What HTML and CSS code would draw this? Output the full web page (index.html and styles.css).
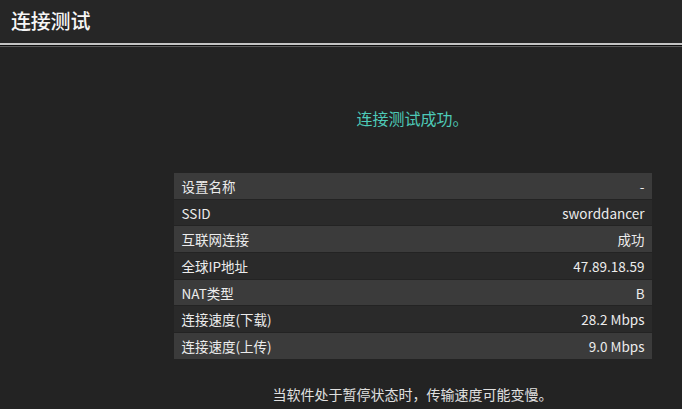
FILE: index.html
```html
<!DOCTYPE html>
<html lang="zh-CN">
<head>
<meta charset="utf-8">
<title>连接测试</title>
<link rel="stylesheet" href="styles.css">
</head>
<body>
<header class="topbar">
  <h1 class="title">连接测试</h1>
</header>
<div class="rule"></div>
<main class="content">
  <p class="status">连接测试成功。</p>
  <div class="table">
    <div class="row"><span>设置名称</span><span>-</span></div>
    <div class="row"><span>SSID</span><span>sworddancer</span></div>
    <div class="row"><span>互联网连接</span><span>成功</span></div>
    <div class="row"><span>全球IP地址</span><span>47.89.18.59</span></div>
    <div class="row"><span>NAT类型</span><span>B</span></div>
    <div class="row"><span>连接速度(下载)</span><span>28.2 Mbps</span></div>
    <div class="row"><span>连接速度(上传)</span><span>9.0 Mbps</span></div>
  </div>
  <p class="note">当软件处于暂停状态时，传输速度可能变慢。</p>
</main>
</body>
</html>
```
FILE: styles.css
```css
html, body {
  margin: 0;
  padding: 0;
}
body {
  width: 682px;
  height: 409px;
  overflow: hidden;
  background: #232323;
  color: #ececec;
  font-family: "Noto Sans CJK SC", "Noto Sans", sans-serif;
}
.topbar {
  height: 43px;
  background: #262626;
  display: flex;
  align-items: center;
  padding-left: 11px;
}
.title {
  margin: 0;
  font-size: 20px;
  font-weight: 500;
  color: #f6f6f6;
  letter-spacing: -0.2px;
  position: relative;
  top: -1px;
}
.rule {
  height: 2px;
  background: #c4c4c4;
  border-bottom: 1px solid #0c0c0c;
  box-shadow: 0 1px 0 #5a5a5a;
  margin-bottom: 1px;
}
.content {
  padding-left: 143px;
  display: flex;
  flex-direction: column;
  align-items: center;
}
.status {
  margin: 59px 0 0;
  height: 24px;
  line-height: 24px;
  font-size: 16px;
  color: #4ecab8;
}
.table {
  margin-top: 43px;
  width: 478px;
  display: flex;
  flex-direction: column;
  gap: 1px;
}
.row {
  height: 25.7px;
  display: flex;
  justify-content: space-between;
  align-items: center;
  padding: 0 7px 0 8px;
  font-size: 13.5px;
  color: #ececec;
  background: #2a2a2a;
}
.row:nth-child(odd) {
  background: #3b3b3b;
}
.note {
  margin: 23px 0 0;
  font-size: 14px;
  line-height: 24px;
  color: #e0e0e0;
}
```
